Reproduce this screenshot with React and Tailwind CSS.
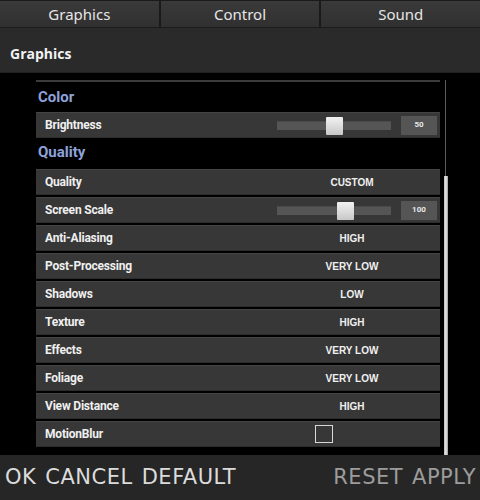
import { useState } from "react";

const rows = [
  { label: "Quality", value: "CUSTOM" },
  { label: "Screen Scale", slider: 60, num: "100" },
  { label: "Anti-Aliasing", value: "HIGH" },
  { label: "Post-Processing", value: "VERY LOW" },
  { label: "Shadows", value: "LOW" },
  { label: "Texture", value: "HIGH" },
  { label: "Effects", value: "VERY LOW" },
  { label: "Foliage", value: "VERY LOW" },
  { label: "View Distance", value: "HIGH" },
  { label: "MotionBlur", check: true },
];

const Slider = ({ pos, num }) => (
  <div className="flex items-center ml-auto mr-[3px]">
    <div className="relative w-[114px] h-[9px] bg-[#555555] border-t border-[#4a4a4a]">
      <div
        className="absolute top-[-5px] w-[17px] h-[18px] bg-gradient-to-b from-[#f2f2f2] to-[#c8c8c8] rounded-[1px]"
        style={{ left: pos }}
      ></div>
    </div>
    <div className="ml-[10px] w-[36px] h-[19px] bg-[#555555] flex items-center justify-center text-[8px] text-[#e8e8e8] font-bold">
      {num}
    </div>
  </div>
);

const Row = ({ row }) => {
  const [checked, setChecked] = useState(false);
  return (
    <div className="h-[26px] bg-[#373737] border-y border-t-[#444444] border-b-[#2c2c2c] flex items-center pl-[9px] mb-[2px]">
      <span className="w-[232px] shrink-0 text-[12px] font-bold text-[#f0f0f0] tracking-[-0.2px]">{row.label}</span>
      {row.value && (
        <span className="w-[150px] shrink-0 text-center text-[10px] font-semibold text-[#f0f0f0]" style={{ fontFamily: "'Liberation Sans', Arial, sans-serif" }}>
          {row.value}
        </span>
      )}
      {row.slider && <Slider pos={row.slider} num={row.num} />}
      {row.check && (
        <div
          onClick={() => setChecked(!checked)}
          className="ml-[38px] w-[18px] h-[18px] border-[1.5px] border-[#d8d8d8] cursor-pointer"
        ></div>
      )}
    </div>
  );
};

const App = () => {
  return (
    <div className="w-[480px] h-[500px] bg-black flex flex-col overflow-hidden" style={{ fontFamily: "Roboto, 'Noto Sans', sans-serif" }}>
      <div className="flex h-[28px] bg-[#1a1a1a] pt-[1px] gap-[2px]" style={{ fontFamily: "'Noto Sans', 'Open Sans', sans-serif" }}>
        {["Graphics", "Control", "Sound"].map((t) => (
          <div key={t} className="flex-1 bg-gradient-to-b from-[#3a3a3a] to-[#303030] border-b border-[#1c1c1c] flex items-center justify-center text-[15px] text-[#e6e6e6]">
            {t}
          </div>
        ))}
      </div>
      <div className="h-[45px] bg-[#2a2a2a] flex items-center pl-[10px] pt-[6px] border-b border-[#202020]">
        <span className="text-[14px] font-bold text-[#f2f2f2]" style={{ fontFamily: "'Open Sans', 'Noto Sans', sans-serif" }}>Graphics</span>
      </div>
      <div className="flex flex-1 min-h-0">
        <div className="w-[36px]"></div>
        <div className="w-[404px] flex flex-col">
          <div className="mt-[7px] h-[2px] bg-[#3c3c3c]"></div>
          <div className="h-[30px] flex items-end pl-[2px] pb-[4px] text-[15px] font-bold text-[#8ea3d9]">Color</div>
          <div className="h-[26px] bg-[#373737] border-y border-t-[#444444] border-b-[#2c2c2c] flex items-center pl-[9px]">
            <span className="text-[12px] font-bold text-[#f0f0f0] tracking-[-0.2px]">Brightness</span>
            <Slider pos={49} num="50" />
          </div>
          <div className="h-[31px] flex items-end pl-[2px] pb-[6px] text-[15px] font-bold text-[#8ea3d9]">Quality</div>
          {rows.map((r) => (
            <Row key={r.label} row={r} />
          ))}
        </div>
        <div className="ml-[3px] w-[5px] mt-[7px] h-[376px] flex flex-col items-center">
          <div className="w-[1px] h-[96px] bg-[#5a5a5a]"></div>
          <div className="w-[4px] flex-1 bg-gradient-to-r from-[#bdbdbd] via-[#e6e6e6] to-[#9a9a9a]"></div>
        </div>
      </div>
      <div className="h-[45px] bg-[#262626] flex items-center justify-between pl-[5px] pr-[4px] text-[21px] tracking-[0.5px]" style={{ fontFamily: "'DejaVu Sans', 'Noto Sans', sans-serif" }}>
        <div className="flex gap-[9px] text-[#dcdcdc]">
          <span>OK</span>
          <span>CANCEL</span>
          <span>DEFAULT</span>
        </div>
        <div className="flex gap-[9px] text-[#9c9c9c]">
          <span>RESET</span>
          <span>APPLY</span>
        </div>
      </div>
    </div>
  );
};

export default App;
